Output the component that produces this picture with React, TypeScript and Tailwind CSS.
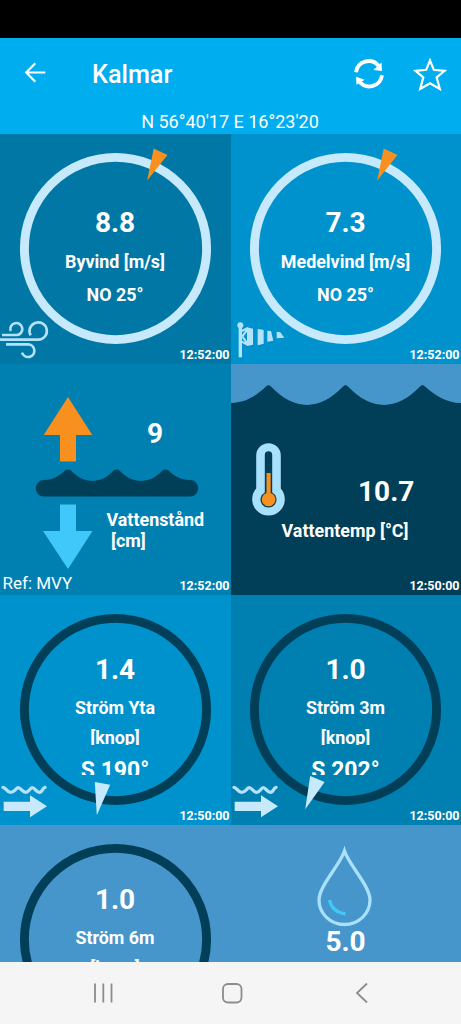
import type { ReactNode } from "react";

type DialProps = {
  bg: string;
  ring: string;
  angle: number;
  flow?: boolean;
  time?: string;
  icon?: ReactNode;
  children: ReactNode;
};

function Time({ value }: { value: string }) {
  return (
    <div className="z-10 col-start-1 row-start-1 self-end justify-self-end pr-[1.5px] pb-px text-[12.5px] leading-4 font-bold">
      {value}
    </div>
  );
}

// Wind points inwards, current points outwards
function Dial({ bg, ring, angle, flow, time, icon, children }: DialProps) {
  return (
    <section className={`grid grid-cols-1 grid-rows-1 overflow-hidden even:[&>svg]:-ml-px ${bg}`}>
      <svg className="col-start-1 row-start-1 h-[230px] w-[231px]" viewBox="0 0 231 230">
        <circle cx="115.5" cy="114.5" r="91.1" fill="none" stroke={ring} strokeWidth="8.9" />
      </svg>
      <div className="col-start-1 row-start-1 pr-px text-center">{children}</div>
      <svg className="col-start-1 row-start-1 h-[230px] w-[231px]" viewBox="0 0 231 230">
        <g transform={`translate(115.5 114.5) rotate(${angle})`}>
          {flow ? (
            <path d="M-7.8 -75h15.6L0 -107.5z" fill="#c6e9fc" />
          ) : (
            <path d="M-7.6 -106.7h15.2L0 -75z" fill="#f7901e" />
          )}
        </g>
      </svg>
      <div className="col-start-1 row-start-1 self-end justify-self-start">{icon}</div>
      {time && <Time value={time} />}
    </section>
  );
}

function WindText({ value, label, dir }: { value: string; label: string; dir: string }) {
  return (
    <div className="pt-[69px] font-bold">
      <div className="text-[28px] leading-10">{value}</div>
      <div className="text-[17.9px] leading-[38px]">{label}</div>
      <div className="text-[17.9px] leading-7">{dir}</div>
    </div>
  );
}

function CurrentText({ value, label, dir }: { value: string; label: string; dir?: string }) {
  return (
    <div className="pt-[55px] font-bold">
      <div className="text-[28px] leading-10">{value}</div>
      <div className="text-[17.9px] leading-9">{label}</div>
      <div className="h-[19px] overflow-hidden text-[17.9px] leading-6">[knop]</div>
      <div className="h-[30px] overflow-hidden text-[23px] leading-[52px]">{dir}</div>
    </div>
  );
}

function GustIcon() {
  return (
    <svg className="h-[49px] w-[50px]" viewBox="0 0 150 147" fill="none" stroke="#b5e2fb" strokeWidth="8">
      <path d="M32 48A18 18 0 1 1 50 60H6" />
      <path d="M92 61A26 26 0 1 1 115 74H0" />
      <path d="M18 88H84A19 19 0 1 1 66 113" />
    </svg>
  );
}

function WindsockIcon() {
  return (
    <svg className="h-[49px] w-[56px]" viewBox="1 0 168 147" fill="#b5e2fb">
      <circle cx="29" cy="31" r="9" />
      <path d="M24 31h10v96H24z" />
      <path d="M33 48L52 39M33 80L52 90M35 64L52 41M35 64L52 89" fill="none" stroke="#b5e2fb" strokeWidth="6" />
      <path d="M49 37L67 41V89L49 93z" />
      <path d="M81 42L99 45V86L81 91z" />
      <path d="M110 47L121 48L128 77L110 80z" />
      <path d="M138 50L149 52L161 68L138 70z" />
    </svg>
  );
}

function CurrentIcon() {
  return (
    <svg className="h-[42px] w-[50px]" viewBox="0 567 150 126">
      <path
        d="M9 580C17 580 20 595 32 595S48 581 55 581 67 595 77 595 90 581 97 581 108 595 118 595 127 581 135 580"
        fill="none"
        stroke="#b5e2fb"
        strokeWidth="10"
        strokeLinecap="round"
      />
      <path d="M11 623H90V604L141 637L90 670V651H11z" fill="#c6e9fc" />
    </svg>
  );
}

function WaterLevel() {
  return (
    <section className="grid grid-cols-1 grid-rows-1 bg-[#007fb1]">
      <svg className="col-start-1 row-start-1 h-[231px] w-[231px]" viewBox="0 0 231 231">
        <path d="M68 33L92.3 71H76V97.5H60V71H43.7z" fill="#f7901e" />
        <path
          d="M44 116C54 116 60 111 65 106.500Q68 104.500 71 106.500C84 120.500 101 120.500 113.500 106.500Q116.500 104.500 119.500 106.500C132.500 120.500 149.500 120.500 162.500 106.500Q165.500 104.500 168.500 106.500C174 112 181 116 190 116A8.300 8.300 0 0 1 190 132.600H44A8.300 8.300 0 0 1 44 116z"
          fill="#003f57"
        />
        <path d="M60 140.500H76V167H92.500L68 205L43 167H60z" fill="#40c8fa" />
      </svg>
      <div className="col-start-1 row-start-1 pt-[50px] font-bold">
        <div className="pl-[147px] text-[28px] leading-10">9</div>
        <div className="pt-[55px] pl-[106.500px] text-[17.9px] leading-[21px] whitespace-pre">{"Vattenstånd\n [cm]"}</div>
      </div>
      <div className="col-start-1 row-start-1 self-end justify-self-start pb-px pl-[2.500px] text-[17px] leading-[22px]">
        Ref: MVY
      </div>
      <Time value="12:52:00" />
    </section>
  );
}

function WaterTemp() {
  return (
    <section className="grid grid-cols-1 grid-rows-1 overflow-hidden bg-[#003f57]">
      <svg className="col-start-1 row-start-1 -ml-px h-[231px] w-[231px]" viewBox="0 0 231 231">
        <path
          d="M0 0H231V39C216 39 205 31 195 22.500Q192.500 20 190 22.500C167 47 141 47 118 22.500Q115.500 20 113 22.500C90 47 64 47 41 22.500Q38.500 20 36 22.500C26 32 15 39 0 39z"
          fill="#4696cb"
        />
        <path
          d="M26.200 91.500a12.300 12.300 0 0 1 24.600 0v33a16.300 16.300 0 1 1-24.600 0z"
          fill="#a9e0fb"
        />
        <path d="M34.800 91a3.700 3.700 0 0 1 7.400 0v37.500a8 8 0 1 1-7.400 0z" fill="#003f57" />
        <path d="M36.500 109h4.200V129a6.800 6.800 0 1 1-4.200 0z" fill="#f7901e" />
      </svg>
      <div className="col-start-1 row-start-1 pt-[108px] font-bold">
        <div className="pl-[127px] text-[28px] leading-10">10.7</div>
        <div className="pt-[5px] pr-[2px] text-center text-[17.9px] leading-7">Vattentemp [°C]</div>
      </div>
      <Time value="12:50:00" />
    </section>
  );
}

function Humidity() {
  return (
    <section className="flex flex-col items-center bg-[#4696cb] pt-5">
      <svg className="-ml-[2px] h-[83px] w-[60px]" viewBox="0 0 60 83" fill="none">
        <path
          d="M29.500 6C25 20 4 41 4 55A25.500 24.500 0 0 0 55 55C55 41 34 20 29.500 6z"
          stroke="#a9e0fb"
          strokeWidth="3.300"
        />
        <path d="M14.500 55Q17 67 30.500 69" stroke="#40c8fa" strokeWidth="3.300" />
      </svg>
      <div className="-mt-[6px] pr-px text-[28px] leading-10 font-bold">5.0</div>
    </section>
  );
}

function Header() {
  return (
    <header className="h-24 bg-[#00adef]">
      <div className="flex h-[73px] items-center">
        <svg className="-mt-[3px] ml-[24px] h-6 w-6" viewBox="0 0 24 24" fill="none" stroke="#fff" strokeWidth="2.200">
          <path d="M21.300 11.500H2.500M11.300 2.300L2.200 11.500L11.300 20.700" />
        </svg>
        <h1 className="ml-[44px] text-[25.200px] leading-8 font-medium">Kalmar</h1>
        <svg className="mr-[26px] ml-auto h-8 w-8" viewBox="0 0 32 32">
          <path
            d="M3 13.300A12.800 12.800 0 0 1 25.500 6.700M29 16.300A12.800 12.800 0 0 1 6.500 22.800"
            fill="none"
            stroke="#fff"
            strokeWidth="3.800"
          />
          <path d="M28.500 3.500L29 12L20.300 11zM3 17.800L3.500 25.700L11.700 20.800z" fill="#fff" />
        </svg>
        <svg className="mr-[12px] h-[38px] w-[38px]" viewBox="0 0 38 38" fill="none" stroke="#fff" strokeWidth="2.200">
          <path d="M19 4.500L22.800 13.800L33.500 14.800L25.700 21.500L28.800 33L19 27.200L9.200 33L12.300 21.500L4.500 14.800L15.200 13.800z" />
        </svg>
      </div>
      <div className="pr-px text-center text-[18px] leading-[22px]">N 56°40'17 E 16°23'20</div>
    </header>
  );
}

function NavBar() {
  return (
    <nav className="flex h-[62px] bg-[#f5f5f5] pl-[92px]">
      <svg className="mt-5 h-[22px] w-[22px]" viewBox="0 0 22 22" stroke="#8c8c8c" strokeWidth="1.800">
        <path d="M3 1.500V20.500M11.300 1.500V20.500M19.500 1.500V20.500" />
      </svg>
      <svg className="mt-5 ml-[107px] h-[22px] w-[22px]" viewBox="0 0 22 22" fill="none" stroke="#8c8c8c" strokeWidth="1.800">
        <rect x="2" y="2" width="18.500" height="18.500" rx="5" />
      </svg>
      <svg className="mt-5 ml-[109px] h-[22px] w-[22px]" viewBox="0 0 22 22" fill="none" stroke="#8c8c8c" strokeWidth="1.800">
        <path d="M15 1.500L5 11L15 20.500" />
      </svg>
    </nav>
  );
}

export default function App() {
  return (
    <div className="h-[1024px] w-[461px] overflow-hidden bg-black pt-[38px] font-['Roboto',sans-serif] text-white">
      <Header />
      <main className="grid h-[828px] grid-cols-[231px_230px] grid-rows-[230px_231px_230px_230px] overflow-hidden">
        <Dial bg="bg-[#0077a4]" ring="#c6e9fc" angle={25} time="12:52:00" icon={<GustIcon />}>
          <WindText value="8.8" label="Byvind [m/s]" dir="NO 25°" />
        </Dial>
        <Dial bg="bg-[#0092cc]" ring="#c6e9fc" angle={25} time="12:52:00" icon={<WindsockIcon />}>
          <WindText value="7.3" label="Medelvind [m/s]" dir="NO 25°" />
        </Dial>
        <WaterLevel />
        <WaterTemp />
        <Dial bg="bg-[#0092cc]" ring="#003f57" angle={190} flow time="12:50:00" icon={<CurrentIcon />}>
          <CurrentText value="1.4" label="Ström Yta" dir="S 190°" />
        </Dial>
        <Dial bg="bg-[#007fb1]" ring="#003f57" angle={202} flow time="12:50:00" icon={<CurrentIcon />}>
          <CurrentText value="1.0" label="Ström 3m" dir="S 202°" />
        </Dial>
        <Dial bg="bg-[#4696cb]" ring="#003f57" angle={190} flow>
          <CurrentText value="1.0" label="Ström 6m" />
        </Dial>
        <Humidity />
      </main>
      <NavBar />
    </div>
  );
}
